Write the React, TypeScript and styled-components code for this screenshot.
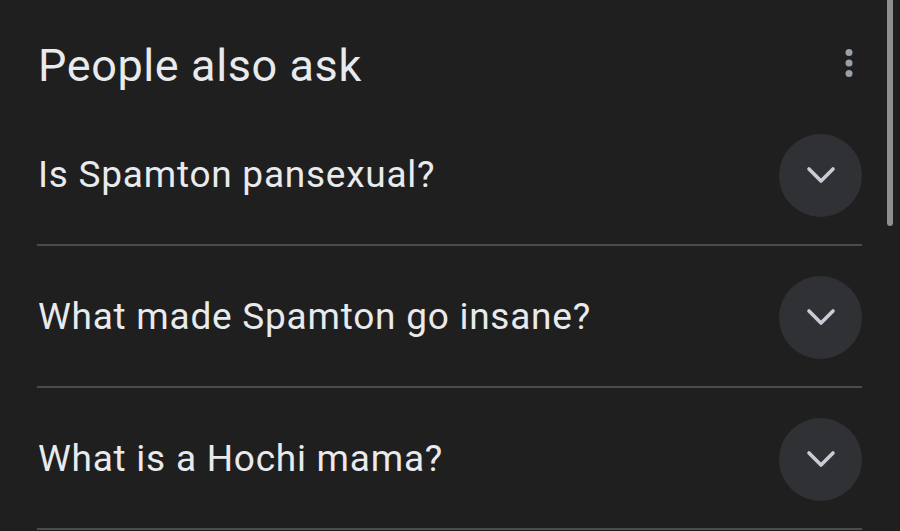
import React from "react";
import styled, { createGlobalStyle } from "styled-components";

const Global = createGlobalStyle`
  html, body { margin: 0; padding: 0; background: #1f1f1f; }
  body { font-family: "Roboto", "Liberation Sans", sans-serif; overflow: hidden; }
`;

const Page = styled.div`
  position: relative;
  width: 900px;
  height: 531px;
  background: #1f1f1f;
  overflow: hidden;
`;

const Panel = styled.div`
  display: flex;
  flex-direction: column;
  width: 825px;
  margin-left: 37px;
`;

const Header = styled.div`
  display: flex;
  justify-content: space-between;
  align-items: flex-start;
  height: 104px;
  padding-top: 28px;
  box-sizing: border-box;
`;

const Title = styled.h2`
  margin: 0;
  padding-left: 1px;
  font-family: "Roboto", "Liberation Sans", sans-serif;
  font-weight: 400;
  font-size: 45px;
  line-height: 76px;
  height: 76px;
  display: flex;
  align-items: center;
  color: #e8eaed;
  letter-spacing: 0.6px;
`;

const Kebab = styled.button`
  display: flex;
  align-items: center;
  justify-content: center;
  width: 24px;
  height: 40px;
  margin-top: 15px;
  margin-right: 1px;
  padding: 0;
  border: none;
  background: transparent;
`;

const Row = styled.div`
  display: flex;
  align-items: center;
  justify-content: space-between;
  height: 140px;
  border-bottom: 2px solid #4a4b4d;
`;

const Question = styled.span`
  padding-left: 1px;
  font-family: "Roboto", "Liberation Sans", sans-serif;
  font-size: 37px;
  font-weight: 400;
  color: #e8eaed;
  letter-spacing: 0.75px;
`;

const Toggle = styled.button`
  display: flex;
  align-items: center;
  justify-content: center;
  width: 83px;
  height: 83px;
  margin-top: 2px;
  border-radius: 50%;
  border: none;
  padding: 0;
  background: #303134;
`;

const Scrollbar = styled.div`
  position: absolute;
  top: -6px;
  right: 7px;
  width: 6px;
  height: 232px;
  border-radius: 3px;
  background: #8f8f8f;
`;

const questions = [
  "Is Spamton pansexual?",
  "What made Spamton go insane?",
  "What is a Hochi mama?",
];

export default function App() {
  return (
    <Page>
      <Global />
      <Panel>
        <Header>
          <Title>People also ask</Title>
          <Kebab aria-label="More options">
            <svg width="8" height="29" viewBox="0 0 8 29">
              <circle cx="4" cy="3.5" r="3.5" fill="#9aa0a6" />
              <circle cx="4" cy="14" r="3.5" fill="#9aa0a6" />
              <circle cx="4" cy="24.5" r="3.5" fill="#9aa0a6" />
            </svg>
          </Kebab>
        </Header>
        {questions.map((q) => (
          <Row key={q}>
            <Question>{q}</Question>
            <Toggle aria-label="Expand">
              <svg width="30" height="20" viewBox="0 0 30 20">
                <polyline
                  points="3,4 15,16 27,4"
                  fill="none"
                  stroke="#c9cbd6"
                  strokeWidth="3.6"
                  strokeLinecap="round"
                  strokeLinejoin="round"
                />
              </svg>
            </Toggle>
          </Row>
        ))}
      </Panel>
      <Scrollbar />
    </Page>
  );
}
